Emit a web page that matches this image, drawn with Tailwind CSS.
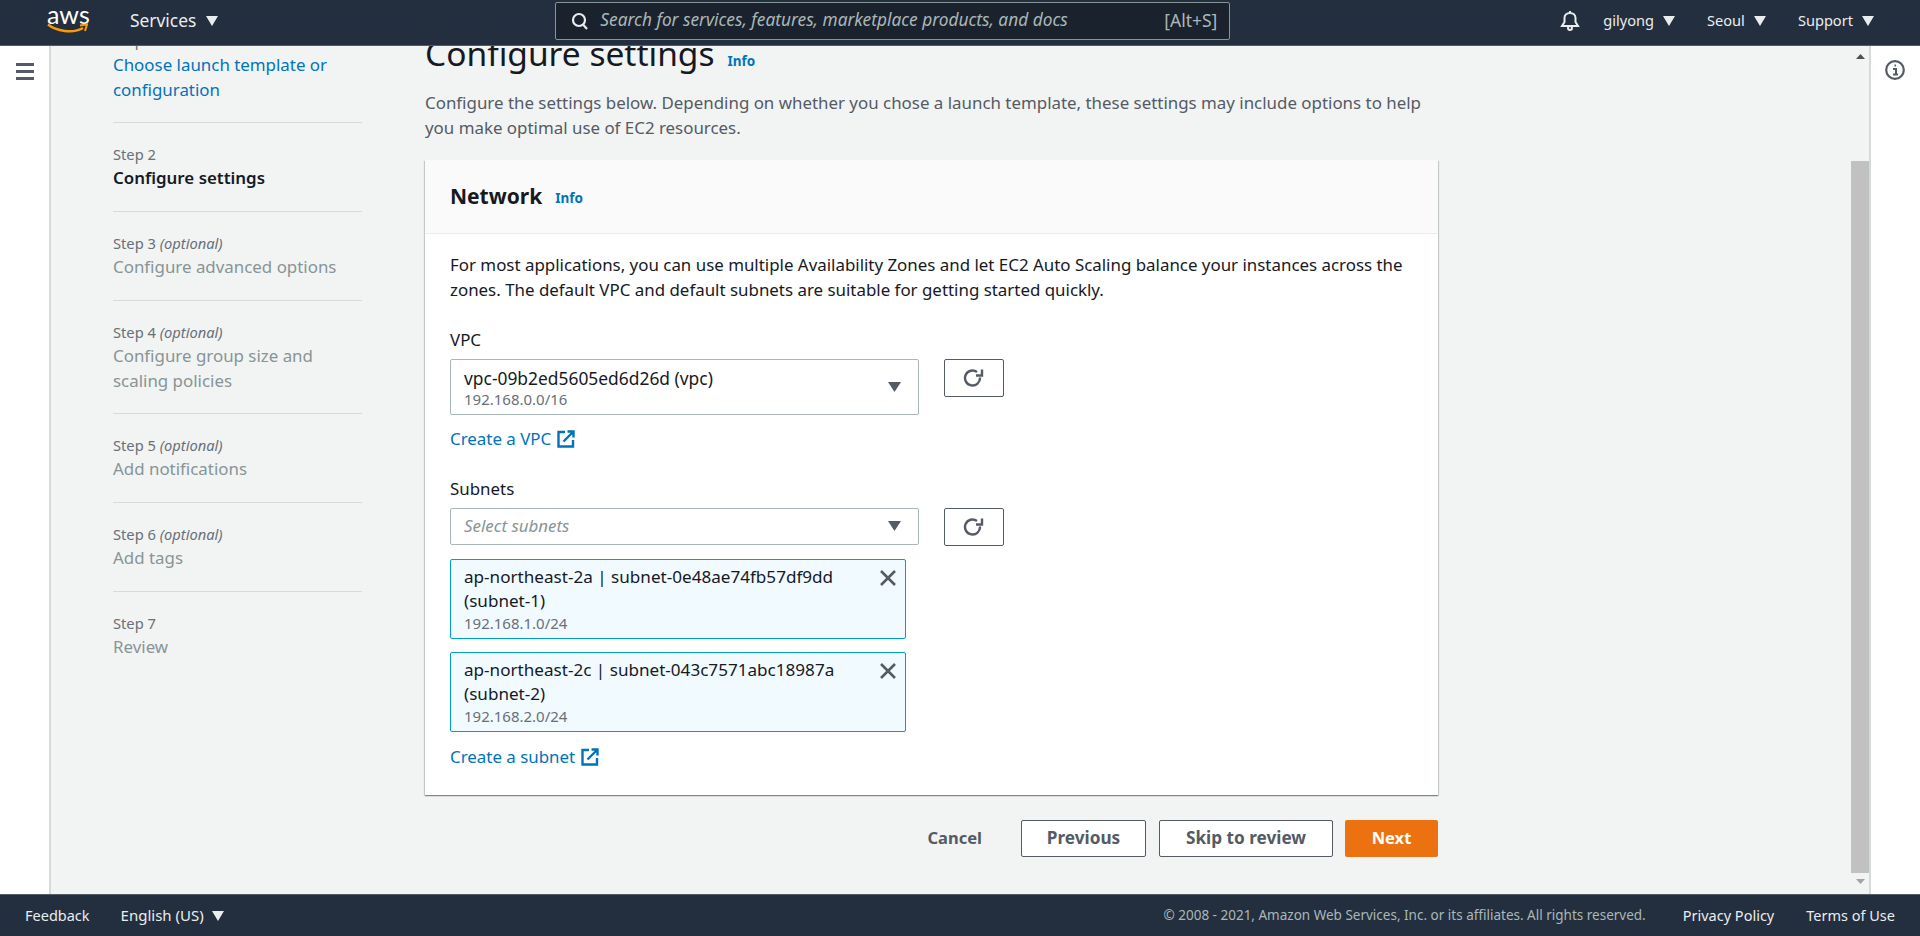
<!DOCTYPE html>
<html lang="en">
<head>
    <meta charset="UTF-8">
    <title>Create Auto Scaling group - Configure settings</title>
    <script src="https://cdn.jsdelivr.net/npm/@tailwindcss/browser@4"></script>
</head>
<body class="h-screen overflow-hidden bg-[#f2f3f3] font-['Noto_Sans',sans-serif] text-[16.9px] leading-[24.5px] text-[#16191f]">
<div class="h-full flex flex-col">
    <!-- Top nav -->
    <header class="h-[46px] shrink-0 flex items-center bg-[#232f3e] border-b border-[#545b64] pb-[4px] text-[#eaeded]">
        <div class="relative w-[41px] h-[46px] ml-[47px]">
            <span class="absolute left-0 top-[1px] font-['Lato',sans-serif] text-[25px] leading-[30px] text-white">aws</span>
            <svg class="absolute left-0 top-[25px]" width="41" height="11" viewBox="0 0 41 11" fill="none"><path d="M1 1.5C9 8 26 11 36 5" stroke="#f90" stroke-width="2.4"/><path d="M33 2.5L40 1.5L38 8" stroke="#f90" stroke-width="2"/></svg>
        </div>
        <span class="ml-[42px] text-[17.400px]">Services</span>
        <svg class="ml-[10px]" width="12" height="10" viewBox="0 0 12 10"><path d="M0 0H12L6 10Z" fill="#eaeded"/></svg>
        <div class="ml-[337px] w-[675px] h-[38px] flex items-center bg-[#1a222d] border border-[#879596] rounded-[2px] pl-[14px] pr-[12px]">
            <svg width="20" height="20" viewBox="0 0 20 20" fill="none" stroke="#eaeded" stroke-width="2.2"><circle cx="9" cy="9" r="6"/><path d="M13 13.5L17 18"/></svg>
            <span class="ml-[10px] italic text-[17.300px] text-[#aab7b8]">Search for services, features, marketplace products, and docs</span>
            <span class="ml-auto text-[17.500px] text-[#aab7b8]">[Alt+S]</span>
        </div>
        <svg class="ml-auto" width="20" height="21" viewBox="0 0 20 21" fill="none" stroke="#eaeded" stroke-width="2"><path d="M10 1V3M2 16H18L15.500 12V8C15.500 5 13 3 10 3S4.500 5 4.500 8V12Z"/><circle cx="10" cy="18" r="2"/></svg>
        <span class="ml-[23px] text-[14.600px]">gilyong</span>
        <svg class="ml-[9px]" width="12" height="10" viewBox="0 0 12 10"><path d="M0 0H12L6 10Z" fill="#eaeded"/></svg>
        <span class="ml-[32px] text-[14.600px]">Seoul</span>
        <svg class="ml-[9px]" width="12" height="10" viewBox="0 0 12 10"><path d="M0 0H12L6 10Z" fill="#eaeded"/></svg>
        <span class="ml-[32px] text-[14.600px]">Support</span>
        <svg class="ml-[9px] mr-[46px]" width="12" height="10" viewBox="0 0 12 10"><path d="M0 0H12L6 10Z" fill="#eaeded"/></svg>
    </header>

    <div class="flex-1 flex min-h-0">
        <!-- Left rail -->
        <div class="w-[51px] shrink-0 bg-white border-r-2 border-[#d5dbdb] pt-[17px] pl-[16px]">
            <div class="w-[18px] flex flex-col gap-[4px]">
                <div class="h-[3px] bg-[#545b64]"></div>
                <div class="h-[3px] bg-[#545b64]"></div>
                <div class="h-[3px] bg-[#545b64]"></div>
            </div>
        </div>

        <!-- Main area, scrolled down a little -->
        <main class="flex-1 overflow-hidden flex pl-[62px]">
            <!-- Wizard steps -->
            <nav class="w-[249px] shrink-0 -mt-[16px]">
                <div class="h-[93px] border-b border-[#d5dbdb]">
                    <div class="mb-[2px] text-[14.700px] leading-[21px] text-[#687078]">Step 1</div>
                    <div class="text-[#0073bb]">Choose launch template or configuration</div>
                </div>
                <div class="h-[89px] border-b border-[#d5dbdb] pt-[21px]">
                    <div class="mb-[1px] text-[14.700px] leading-[21px] text-[#687078]">Step 2</div>
                    <div class="font-semibold">Configure settings</div>
                </div>
                <div class="h-[89px] border-b border-[#d5dbdb] pt-[21px]">
                    <div class="mb-[1px] text-[14.700px] leading-[21px] text-[#687078]">Step 3 <i>(optional)</i></div>
                    <div class="text-[#879596]">Configure advanced options</div>
                </div>
                <div class="h-[113px] border-b border-[#d5dbdb] pt-[21px]">
                    <div class="mb-[1px] text-[14.700px] leading-[21px] text-[#687078]">Step 4 <i>(optional)</i></div>
                    <div class="text-[#879596]">Configure group size and scaling policies</div>
                </div>
                <div class="h-[89px] border-b border-[#d5dbdb] pt-[21px]">
                    <div class="mb-[1px] text-[14.700px] leading-[21px] text-[#687078]">Step 5 <i>(optional)</i></div>
                    <div class="text-[#879596]">Add notifications</div>
                </div>
                <div class="h-[89px] border-b border-[#d5dbdb] pt-[21px]">
                    <div class="mb-[1px] text-[14.700px] leading-[21px] text-[#687078]">Step 6 <i>(optional)</i></div>
                    <div class="text-[#879596]">Add tags</div>
                </div>
                <div class="pt-[21px]">
                    <div class="mb-[1px] text-[14.700px] leading-[21px] text-[#687078]">Step 7</div>
                    <div class="text-[#879596]">Review</div>
                </div>
            </nav>

            <!-- Form column -->
            <div class="w-[1013px] ml-[63px] shrink-0 -mt-[16px]">
                <div class="flex items-baseline h-[48px]">
                    <h1 class="text-[33.500px] leading-[46px]">Configure settings</h1>
                    <a class="ml-[13px] text-[13.5px] font-bold text-[#0073bb]">Info</a>
                </div>
                <p class="mt-[13px] text-[#545b64]">Configure the settings below. Depending on whether you chose a launch template, these settings may include options to help you make optimal use of EC2 resources.</p>

                <section class="mt-[20px] bg-white shadow-[0_1px_1px_0_rgba(0,28,36,0.3),1px_1px_1px_0_rgba(0,28,36,0.15),-1px_1px_1px_0_rgba(0,28,36,0.15)]">
                    <div class="h-[74px] flex items-center px-[25px] bg-[#fafafa] border-b border-[#eaeded]">
                        <h2 class="text-[21px] font-bold">Network</h2>
                        <a class="ml-[13px] mt-[3px] text-[13.5px] font-bold text-[#0073bb]">Info</a>
                    </div>
                    <div class="px-[25px] pt-[19px] pb-[26px]">
                        <p>For most applications, you can use multiple Availability Zones and let EC2 Auto Scaling balance your instances across the zones. The default VPC and default subnets are suitable for getting started quickly.</p>

                        <div class="mt-[26px]">VPC</div>
                        <div class="mt-[6px] flex gap-[25px]">
                            <div class="w-[469px] h-[56px] flex items-center justify-between bg-white border border-[#aab7b8] rounded-[2px] pl-[13px] pr-[17px]">
                                <div>
                                    <div class="text-[17.400px] leading-[24px]">vpc-09b2ed5605ed6d26d (vpc)</div>
                                    <div class="text-[15px] leading-[18px] text-[#687078]">192.168.0.0/16</div>
                                </div>
                                <svg width="13" height="10" viewBox="0 0 13 10"><path d="M0 0H13L6.500 10Z" fill="#545b64"/></svg>
                            </div>
                            <button class="w-[60px] h-[38px] flex items-center justify-center bg-white border border-[#545b64] rounded-[2px]">
                                <svg width="22" height="22" viewBox="0 0 22 22" fill="none" stroke="#545b64" stroke-width="2.4"><path d="M14 5A7.500 7.500 0 1 0 17 10.500"/><path d="M19 2.500V8.500H13"/></svg>
                            </button>
                        </div>
                        <a class="mt-[12px] flex items-center text-[#0073bb]">Create a VPC
                            <svg class="ml-[6px]" width="18" height="18" viewBox="0 0 18 18" fill="none" stroke="#0073bb" stroke-width="2.4"><path d="M8 2H1.500V16.500H16V10"/><path d="M6.500 11.500L16 2M10.500 1.500H16.500V7.500"/></svg>
                        </a>

                        <div class="mt-[26px]">Subnets</div>
                        <div class="mt-[6px] flex gap-[25px]">
                            <div class="w-[469px] h-[37px] flex items-center justify-between bg-white border border-[#aab7b8] rounded-[2px] pl-[13px] pr-[17px]">
                                <span class="italic text-[#879596]">Select subnets</span>
                                <svg width="13" height="10" viewBox="0 0 13 10"><path d="M0 0H13L6.500 10Z" fill="#545b64"/></svg>
                            </div>
                            <button class="w-[60px] h-[38px] flex items-center justify-center bg-white border border-[#545b64] rounded-[2px]">
                                <svg width="22" height="22" viewBox="0 0 22 22" fill="none" stroke="#545b64" stroke-width="2.4"><path d="M14 5A7.500 7.500 0 1 0 17 10.500"/><path d="M19 2.500V8.500H13"/></svg>
                            </button>
                        </div>

                        <div class="mt-[13px] w-[456px] h-[80px] flex justify-between bg-[#f1faff] border border-[#00a1c9] rounded-[2px] pl-[13px] pr-[8px] pt-[5px]">
                            <div>
                                <div class="w-[390px] text-[17.100px]">ap-northeast-2a | subnet-0e48ae74fb57df9dd (subnet-1)</div>
                                <div class="text-[15px] leading-[18px] text-[#687078]">192.168.1.0/24</div>
                            </div>
                            <svg class="mt-[4px]" width="18" height="18" viewBox="0 0 18 18" fill="none" stroke="#545b64" stroke-width="2.6"><path d="M2 2L16 16M16 2L2 16"/></svg>
                        </div>
                        <div class="mt-[13px] w-[456px] h-[80px] flex justify-between bg-[#f1faff] border border-[#00a1c9] rounded-[2px] pl-[13px] pr-[8px] pt-[5px]">
                            <div>
                                <div class="w-[390px] text-[17.100px]">ap-northeast-2c | subnet-043c7571abc18987a (subnet-2)</div>
                                <div class="text-[15px] leading-[18px] text-[#687078]">192.168.2.0/24</div>
                            </div>
                            <svg class="mt-[4px]" width="18" height="18" viewBox="0 0 18 18" fill="none" stroke="#545b64" stroke-width="2.6"><path d="M2 2L16 16M16 2L2 16"/></svg>
                        </div>
                        <a class="mt-[13px] flex items-center text-[#0073bb]">Create a subnet
                            <svg class="ml-[6px]" width="18" height="18" viewBox="0 0 18 18" fill="none" stroke="#0073bb" stroke-width="2.4"><path d="M8 2H1.500V16.500H16V10"/><path d="M6.500 11.500L16 2M10.500 1.500H16.500V7.500"/></svg>
                        </a>
                    </div>
                </section>

                <div class="mt-[25px] flex items-center justify-end font-bold text-[16.5px] text-[#545b64]">
                    <a>Cancel</a>
                    <button class="ml-[39px] w-[125px] h-[37px] bg-white border border-[#545b64] rounded-[2px] font-bold text-[17.200px]">Previous</button>
                    <button class="ml-[13px] w-[174px] h-[37px] bg-white border border-[#545b64] rounded-[2px] font-bold text-[17.200px]">Skip to review</button>
                    <button class="ml-[12px] w-[93px] h-[37px] bg-[#ec7211] rounded-[2px] font-bold text-white">Next</button>
                </div>
            </div>
        </main>

        <!-- Page scrollbar -->
        <div class="w-[18px] shrink-0 flex flex-col items-center bg-[#f2f3f3]">
            <svg class="mt-[8px]" width="9" height="5" viewBox="0 0 9 5"><path d="M0 5H9L4.500 0Z" fill="#505050"/></svg>
            <div class="mt-[102px] w-full h-[712px] bg-[#c1c1c1]"></div>
            <svg class="mt-[6px]" width="9" height="5" viewBox="0 0 9 5"><path d="M0 0H9L4.500 5Z" fill="#a3a3a3"/></svg>
        </div>

        <!-- Right tools panel -->
        <div class="w-[51px] shrink-0 bg-white border-l-2 border-[#d5dbdb] pt-[14px] pl-[14px]">
            <svg width="20" height="20" viewBox="0 0 20 20" fill="none"><circle cx="10" cy="10" r="8.800" stroke="#545b64" stroke-width="2.200"/><path d="M8 9H11V14M8 14.500H13M9.500 5.500H11" stroke="#545b64" stroke-width="2"/></svg>
        </div>
    </div>

    <!-- Footer -->
    <footer class="h-[42px] shrink-0 flex items-center bg-[#232f3e] border-t border-[#545b64] text-[#eaeded] text-[14.5px]">
        <span class="ml-[25px]">Feedback</span>
        <span class="ml-[31px] text-[15px]">English (US)</span>
        <svg class="ml-[8px]" width="12" height="10" viewBox="0 0 12 10"><path d="M0 0H12L6 10Z" fill="#eaeded"/></svg>
        <span class="ml-auto text-[13.5px] text-[#aab7b8]">© 2008 - 2021, Amazon Web Services, Inc. or its affiliates. All rights reserved.</span>
        <span class="ml-[37px]">Privacy Policy</span>
        <span class="ml-[32px] mr-[25px]">Terms of Use</span>
    </footer>
</div>
</body>
</html>
